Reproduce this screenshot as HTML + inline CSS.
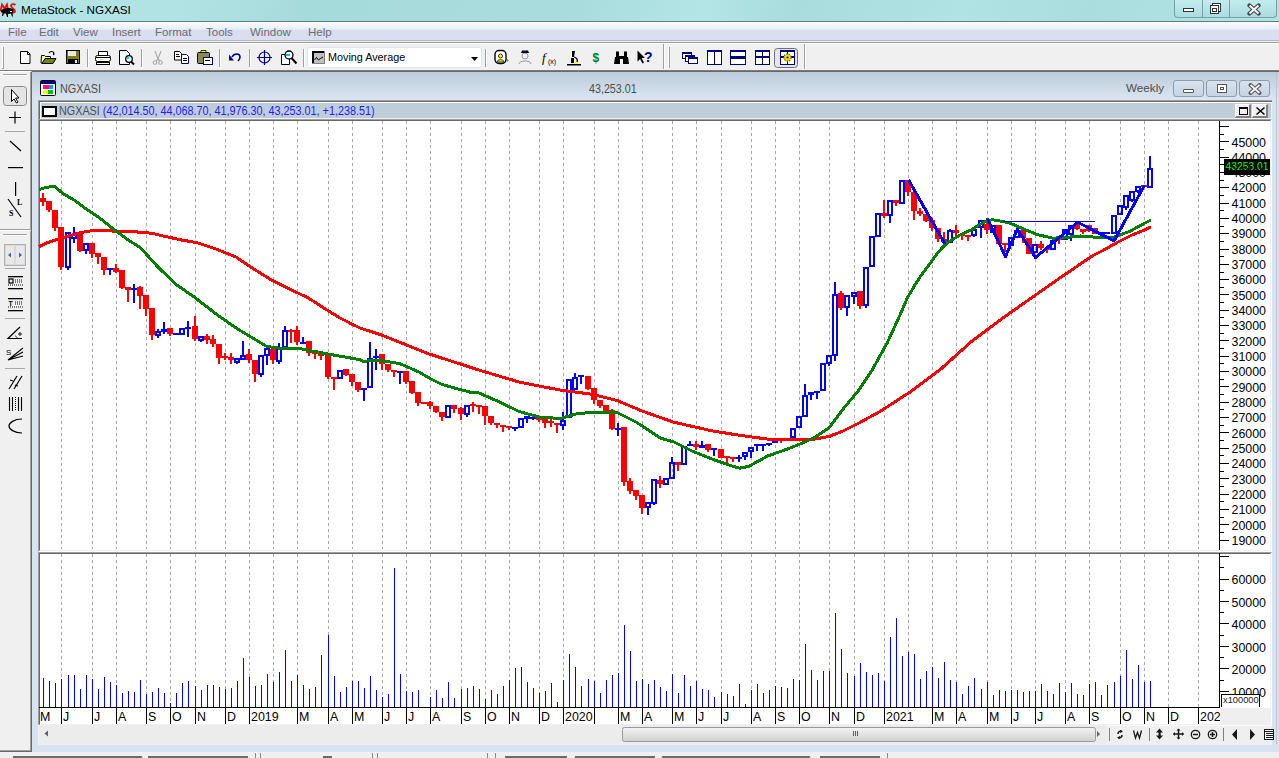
<!DOCTYPE html>
<html><head><meta charset="utf-8">
<style>
*{box-sizing:border-box;margin:0;padding:0}
html,body{width:1279px;height:758px;overflow:hidden;background:#f0f0f0;font-family:"Liberation Sans",sans-serif;font-size:12px;color:#000}
.a{position:absolute}
#title{left:0;top:0;width:1279px;height:22px;background:linear-gradient(110deg,#b4e4e5 0%,#b1e3e4 14%,#a6dbdc 24%,#a9dddd 45%,#b3e5e6 55%,#a8dcdd 62%,#b0e3e4 75%,#aadede 85%,#b2e4e5 100%);border-bottom:1px solid #5f7c80}
#title .t{left:21px;top:3px;font-size:11.7px;color:#000}
#menu{left:0;top:22px;width:1279px;height:19px;background:linear-gradient(#fbfbfd 0%,#eceff7 35%,#d8ddef 50%,#dadff0 100%);border-bottom:1px solid #b4b8c4}
#menu span{position:absolute;top:3.8px;color:#6d6d6d;font-size:11.5px}
#tool{left:0;top:41px;width:1279px;height:30px;background:linear-gradient(#ebebeb 0,#ebebeb 1px,#a0a0a0 1px,#a0a0a0 2px,#fff 2px,#fff 3px,#f0f0f0 3px);border-bottom:1px solid #7c7c7c}
.sep{position:absolute;width:2px;border-left:1px solid #a0a0a0;border-right:1px solid #fff}
#ltool{left:0;top:71px;width:32px;height:681px;background:#f0f0f0;border-top:1px solid #fff;border-right:1px solid #696969;border-bottom:1px solid #696969;box-shadow:inset -1px -1px 0 #a0a0a0}
#mdi{left:32px;top:71px;width:1247px;height:681px;background:#d6e3f0;border-top:1px solid #696969}
#child{left:32px;top:72px;width:1247px;height:28px;background:linear-gradient(#bccbda,#dbe6f1)}
#child .t{left:28px;top:9.5px;font-size:12.6px;color:#4d4d4d;transform:scaleX(0.86);transform-origin:0 0}
.cbtn{position:absolute;top:8px;height:17px;width:31px;border:1px solid #8b9cb3;border-radius:3px;background:linear-gradient(#d9e3ee,#c5d3e2)}
#cw{left:38px;top:100px;width:1234px;height:625px;background:#f0f0f0;border-left:1px solid #a0a0a0;border-top:1px solid #a0a0a0}
#cw2{left:39px;top:101px;width:1233px;height:624px;border-left:1px solid #696969;border-top:1px solid #696969}
.sunk{position:absolute;box-sizing:border-box;border-style:solid;border-width:1px;border-color:#a0a0a0 #fff #fff #a0a0a0}
.sunk>div{position:absolute;left:0;top:0;right:0;bottom:0;border-style:solid;border-width:1px;border-color:#696969 #f0f0f0 #f0f0f0 #696969;background:#fff}
#ctitle{left:40px;top:102px;width:1231px;height:17px;background:#bfcddb;border-top:1px solid #fff;border-left:1px solid #fff;border-bottom:1px solid #f0f0f0}
#corner{left:1220px;top:708px;width:51px;height:17px;background:#efefef}
#scroll{left:38px;top:725px;width:1234px;height:20px;background:#efefef;border-top:1px solid #fafafa}
.yl{position:absolute;left:1230px;width:36px;text-align:right;font-size:12.4px;line-height:14px;color:#000}
.xl{position:absolute;top:710px;font-size:12.4px;line-height:14px;color:#000;background:#fff;padding-right:1px}
#status{left:0;top:752px;width:1279px;height:6px;background:#f0f0f0}
</style></head><body>
<div id="title" class="a">
  <div class="a" style="left:0;top:2px;width:17px;height:16px">
    <svg width="17" height="18" style="position:absolute;top:-2px"><path d="M0.5 11l1.5-6.5l2.5 4l2.5-4l1 6" fill="none" stroke="#ff0000" stroke-width="1.8"/><path d="M15.5 5c-1-1-4-1.5-4.5 0.5c-0.5 2 4 3.5 4 5.5c0 1.5-2 2-3 1.5" fill="none" stroke="#ff0000" stroke-width="1.8"/><path d="M1 10.5c2-2.5 8-3.5 12-1.5c1 1 1 3-0.5 4l0.5 3.5h-1l-1-3l-3 0.5l0 3h-1l-1-3.5l-2 0l-1 2.5h-1l0.5-3c-1.5-0.5-2-1.5-1.5-2.5z" fill="#000"/><rect x="10" y="11" width="2" height="1" fill="#fff"/></svg>
  </div>
  <div class="a t">MetaStock - NGXASI</div>
  <div class="a" style="left:1174px;top:0;width:103px;height:18px;border:1px solid #7f9da1;border-top:none;border-radius:0 0 4px 4px;background:linear-gradient(#c3ecee,#a9dde0)"></div>
  <div class="a" style="left:1202px;top:0;width:1px;height:17px;background:#7f9da1"></div>
  <div class="a" style="left:1229px;top:0;width:1px;height:17px;background:#7f9da1"></div>
  <div class="a" style="left:1183px;top:8px;width:11px;height:4px;border:1px solid #333;background:#fff"></div>
  <svg class="a" style="left:1209px;top:2px" width="13" height="13"><rect x="3.5" y="1.5" width="8" height="8" fill="#fff" stroke="#333"/><rect x="1.5" y="3.5" width="8" height="8" fill="#fff" stroke="#333"/><rect x="3.5" y="6.5" width="4" height="3" fill="none" stroke="#333"/></svg>
  <svg class="a" style="left:1246px;top:3px" width="16" height="13"><path d="M3.5 2.5 L12.5 10.5 M12.5 2.5 L3.5 10.5" stroke="#444" stroke-width="4.2" stroke-linecap="round"/><path d="M3.5 2.5 L12.5 10.5 M12.5 2.5 L3.5 10.5" stroke="#f4f4f4" stroke-width="2.2"/></svg>
</div>
<div id="menu" class="a">
  <span style="left:8px">File</span><span style="left:39px">Edit</span><span style="left:73px">View</span><span style="left:112px">Insert</span><span style="left:155px">Format</span><span style="left:206px">Tools</span><span style="left:250px">Window</span><span style="left:308px">Help</span>
</div>
<div id="tool" class="a">
<!--TOOLBAR-->
</div>
<div id="ltool" class="a">
<!--LTOOL-->
</div>
<div id="mdi" class="a"></div>
<div id="child" class="a">
  <svg class="a" style="left:8px;top:8px" width="16" height="17"><rect x="0.5" y="0.5" width="15" height="15" rx="1" fill="#fff" stroke="#000"/><rect x="1" y="1" width="14" height="3" fill="#000080"/><rect x="3" y="5" width="10" height="4" fill="#ff00a0"/><rect x="9" y="5" width="4" height="4" fill="#00a0ff"/><rect x="3" y="10" width="10" height="4" fill="#00c000"/><rect x="3" y="10" width="5" height="4" fill="#ffff00"/></svg>
  <div class="a t">NGXASI</div>
  <div class="a" style="left:557px;top:9.5px;font-size:12.6px;color:#4d4d4d;transform:scaleX(0.85);transform-origin:0 0">43,253.01</div>
  <div class="a" style="left:1094px;top:8.5px;font-size:11.7px;color:#4d4d4d">Weekly</div>
  <div class="cbtn" style="left:1141px"><div class="a" style="left:9px;top:8px;width:11px;height:4px;border:1px solid #555;background:#fff;border-radius:1px"></div></div>
  <div class="cbtn" style="left:1174px"><div class="a" style="left:10px;top:3px;width:10px;height:9px;border:1px solid #555;background:#fff"></div><div class="a" style="left:13px;top:6px;width:4px;height:3px;border:1px solid #555"></div></div>
  <div class="cbtn" style="left:1207px"><svg class="a" style="left:8px;top:2px" width="14" height="12"><path d="M2.5 2 L11.5 10 M11.5 2 L2.5 10" stroke="#555" stroke-width="3.8" stroke-linecap="round"/><path d="M2.5 2 L11.5 10 M11.5 2 L2.5 10" stroke="#f4f4f4" stroke-width="1.8"/></svg></div>
</div>
<div class="a" style="left:1276px;top:72px;width:1px;height:672px;background:#b9c6d4"></div>
<div id="cw" class="a"></div><div id="cw2" class="a"></div>
<div id="ctitle" class="a">
  <div class="a" style="left:1px;top:3px;width:15px;height:11px;border:2px solid #000;background:#fff"></div>
  <div class="a" style="left:18px;top:1px;font-size:12.5px;color:#4d4d4d;white-space:nowrap;transform:scaleX(0.864);transform-origin:0 0">NGXASI <span style="color:#1c1cff">(42,014.50, 44,068.70, 41,976.30, 43,253.01, +1,238.51)</span></div>
  <div class="a" style="left:1194px;top:1px;width:16px;height:14px;background:#f0f0f0;border-right:2px solid #808080;border-bottom:2px solid #808080;border-top:1px solid #fff;border-left:1px solid #fff"><div class="a" style="left:3px;top:2px;width:9px;height:8px;border:1px solid #000;border-top-width:2px"></div></div>
  <div class="a" style="left:1211px;top:1px;width:16px;height:14px;background:#f0f0f0;border-right:2px solid #808080;border-bottom:2px solid #808080;border-top:1px solid #fff;border-left:1px solid #fff"><svg class="a" style="left:2px;top:1px" width="11" height="11"><path d="M1.5 1.5L9.5 8.5M9.5 1.5L1.5 8.5" stroke="#000" stroke-width="1.5"/></svg></div>
</div>
<div class="sunk" style="left:38px;top:119px;width:1234px;height:433px"><div></div></div>
<div class="sunk" style="left:38px;top:552px;width:1234px;height:174px"><div></div></div>
<div id="corner" class="a"></div>
<div id="scroll" class="a">
<!--SCROLL-->
</div>
<div id="status" class="a"></div>
<svg width="1279" height="758" style="position:absolute;left:0;top:0"><defs><linearGradient id="thumb" x1="0" y1="0" x2="0" y2="1"><stop offset="0" stop-color="#f4f4f4"/><stop offset="0.5" stop-color="#e2e2e2"/><stop offset="1" stop-color="#cfcfcf"/></linearGradient></defs><rect x="2" y="47" width="1" height="22" fill="#fff"/><rect x="3" y="47" width="1" height="22" fill="#a0a0a0"/><rect x="2" y="68" width="2" height="1" fill="#a0a0a0"/><path d="M20.5 51.5h7l2.5 2.5v9.5h-9.5z" fill="#fff" stroke="#000"/><path d="M27.5 51.5v3h2.5" fill="none" stroke="#000"/><path d="M41.5 55.5h3l1 1h5v6.5h-9.5z" fill="#ffff80" stroke="#000"/><path d="M42 63.5l3-5h11l-3 5z" fill="#808000" stroke="#000"/><path d="M49 53c1-2 4-2 5 0" fill="none" stroke="#000" stroke-width="1.2"/><path d="M53 52.5l2 1.5l-2 1.5" fill="#000"/><rect x="66.5" y="50.5" width="13" height="13" fill="#808000" stroke="#000"/><rect x="68" y="51" width="8" height="5" fill="#e8e8e8"/><rect x="68" y="59" width="10" height="4.5" fill="#000"/><rect x="75" y="60" width="2" height="3" fill="#e8e8e8"/><rect x="87" y="49" width="1" height="18" fill="#a0a0a0"/><rect x="88" y="49" width="1" height="18" fill="#fff"/><path d="M98.5 51.5h9v4h-9z" fill="#fff" stroke="#000"/><rect x="95.5" y="55.5" width="15" height="6" rx="2" fill="#fff" stroke="#000"/><rect x="96" y="57" width="14" height="1" fill="#000"/><rect x="100" y="59" width="3" height="1" fill="#ff0"/><rect x="96.5" y="62.5" width="13" height="2" fill="#fff" stroke="#000"/><path d="M119.5 50.5h7l3 3v11h-10z" fill="#fff" stroke="#000"/><circle cx="129" cy="59" r="3.3" fill="#e6f7ff" stroke="#000" stroke-width="1.3"/><path d="M131 61.5l3 3" stroke="#000" stroke-width="2"/><rect x="127" y="57" width="2" height="2" fill="#00e0ff"/><rect x="141" y="49" width="1" height="18" fill="#a0a0a0"/><rect x="142" y="49" width="1" height="18" fill="#fff"/><g stroke="#a8a8a8" fill="none" stroke-width="1.1"><path d="M155 51l3 8l3-8"/><circle cx="155" cy="62.5" r="1.8"/><circle cx="160.5" cy="62.5" r="1.8"/><path d="M156 61l2-2l2 2"/></g><path d="M174.5 51.5h5l2 2v6.5h-7z" fill="#fff" stroke="#000"/><rect x="176" y="54" width="3" height="1" fill="#000"/><rect x="176" y="56" width="4" height="1" fill="#000"/><path d="M181.5 54.5h5l2 2v7h-7z" fill="#fff" stroke="#000080"/><rect x="183" y="58" width="4" height="1" fill="#000"/><rect x="183" y="60" width="4" height="1" fill="#000"/><rect x="197.5" y="52.5" width="12" height="11" rx="1" fill="#8a8a4a" stroke="#000"/><path d="M201 52.5h5v-2h-5z" fill="#ff0" stroke="#000" stroke-width="0.8"/><rect x="203.5" y="57.5" width="9" height="7" fill="#fff" stroke="#000080"/><rect x="205" y="60" width="5" height="1" fill="#000"/><rect x="219" y="49" width="1" height="18" fill="#a0a0a0"/><rect x="220" y="49" width="1" height="18" fill="#fff"/><path d="M232 57c2-4 8-4 8 0c0 2-1 3-2 4" fill="none" stroke="#000080" stroke-width="1.6"/><path d="M229 54.5v6h5z" fill="#000080"/><rect x="249" y="49" width="1" height="18" fill="#a0a0a0"/><rect x="250" y="49" width="1" height="18" fill="#fff"/><circle cx="264.5" cy="57.5" r="5.5" fill="none" stroke="#000080" stroke-width="1.2"/><path d="M264.5 50v15M257 57.5h15" stroke="#000080" stroke-width="1.2"/><path d="M281.5 54.5h6l2 2v8h-8z" fill="#fff" stroke="#000"/><circle cx="289" cy="55" r="4" fill="#fff" stroke="#000" stroke-width="1.3"/><rect x="286" y="54" width="4" height="2" fill="#00c8e0"/><path d="M291.5 58l5 5.5" stroke="#000" stroke-width="2"/><rect x="303" y="49" width="1" height="18" fill="#a0a0a0"/><rect x="304" y="49" width="1" height="18" fill="#fff"/><rect x="307.5" y="47.5" width="174" height="20" rx="2" fill="#fff" stroke="#dde5ee"/><rect x="312" y="51" width="13" height="13" fill="#808080"/><rect x="312" y="51" width="12" height="12" fill="#000"/><rect x="314" y="53" width="10" height="10" fill="#c0c0c0"/><path d="M314.5 60l2-2.5l2 2.5l2-1.5l2.5-1.5" fill="none" stroke="#000" stroke-width="1"/><path d="M471 57h7l-3.5 4z" fill="#000"/><rect x="485" y="49" width="1" height="18" fill="#a0a0a0"/><rect x="486" y="49" width="1" height="18" fill="#fff"/><rect x="495" y="50.5" width="11" height="13" rx="4" fill="#fff" stroke="#000" stroke-width="1.4"/><circle cx="500.5" cy="56" r="2" fill="#ff0" stroke="#000" stroke-width="0.8"/><path d="M497 62c0-3 7-3 7 0z" fill="#ff0" stroke="#000" stroke-width="0.8"/><path d="M507 59l2 1.5l-2 1.5z" fill="#808080"/><g fill="none" stroke="#9a9a9a"><circle cx="525" cy="56" r="3"/><path d="M519 64c0-4 12-4 12 0"/></g><path d="M521 53h8l-1-2.5h-6z" fill="#000"/><rect x="524" y="51" width="2" height="1" fill="#00f"/><text x="542" y="62" font-family="Liberation Serif" font-style="italic" font-size="13" fill="#000">f</text><text x="548" y="64" font-family="Liberation Sans" font-size="7" fill="#000">(x)</text><path d="M572 51l3 0l-1 6l-2 0z" fill="#000"/><path d="M574 57c3 1 4 3 3 5" fill="none" stroke="#000" stroke-width="1.3"/><rect x="571" y="58" width="3" height="5" fill="#000"/><rect x="567" y="64" width="14" height="1.5" fill="#000"/><rect x="574" y="62" width="4" height="1.5" fill="#ff0"/><text x="592.5" y="61.5" font-family="Liberation Sans" font-weight="bold" font-size="12" fill="#008000">$</text><path d="M615 57h5v7h-6z M623 57h5l1 7h-6z" fill="#000"/><rect x="616" y="51.5" width="3" height="6" fill="#000"/><rect x="624" y="51.5" width="3" height="6" fill="#000"/><rect x="619" y="56" width="5" height="3" fill="#000"/><path d="M637.5 50.5v11l2.5-2.5l2.5 4.5l1.5-1l-2.5-4.5h3.5z" fill="#000"/><text x="644" y="61.5" font-family="Liberation Sans" font-weight="bold" font-size="14" fill="#000080">?</text><rect x="663" y="44" width="1" height="25" fill="#a0a0a0"/><rect x="664" y="44" width="1" height="25" fill="#fff"/><rect x="668" y="47" width="1" height="21" fill="#fff"/><rect x="669" y="47" width="1" height="21" fill="#a0a0a0"/><g fill="#fff" stroke="#000080"><rect x="682.5" y="52.5" width="9" height="6"/><rect x="685.5" y="55.5" width="9" height="6"/><rect x="688.5" y="57.5" width="9" height="6"/></g><g fill="#000080"><rect x="682" y="52" width="10" height="2"/><rect x="685" y="55" width="10" height="2"/><rect x="688" y="57" width="10" height="2"/></g><rect x="707.5" y="50.5" width="14" height="14" fill="#fff" stroke="#000080"/><rect x="707" y="50" width="15" height="2" fill="#000080"/><rect x="714" y="50" width="1" height="15" fill="#000080"/><rect x="730.5" y="50.5" width="15" height="14" fill="#fff" stroke="#000080"/><rect x="730" y="50" width="16" height="2" fill="#000080"/><rect x="730" y="56" width="16" height="3" fill="#000080"/><rect x="755.5" y="50.5" width="14" height="14" fill="#fff" stroke="#000080"/><rect x="755" y="50" width="15" height="2" fill="#000080"/><rect x="755" y="56" width="15" height="2" fill="#000080"/><rect x="762" y="50" width="1" height="15" fill="#000080"/><rect x="774.5" y="48.5" width="23" height="19" rx="3" fill="#e6e6e6" stroke="#707070"/><rect x="780.5" y="50.5" width="14" height="14" fill="#fff" stroke="#000080"/><rect x="780" y="50" width="15" height="2" fill="#000080"/><rect x="780" y="56" width="15" height="2" fill="#000080"/><rect x="787" y="50" width="1" height="15" fill="#000080"/><circle cx="787.5" cy="57.5" r="3.6" fill="#e8e000" stroke="#806000" stroke-width="1.2" stroke-dasharray="1.5 1"/><circle cx="787.5" cy="57.5" r="1" fill="#000"/><rect x="804" y="44" width="1" height="25" fill="#a0a0a0"/><rect x="805" y="44" width="1" height="25" fill="#fff"/><rect x="3" y="74" width="24" height="1" fill="#a0a0a0"/><rect x="3" y="75" width="24" height="1" fill="#fff"/><rect x="3.5" y="86.5" width="23" height="19" rx="3" fill="#e4e4e4" stroke="#8a8a8a"/><path d="M11.5 89.5v12l2.5-2.5l2.5 4l1.5-1l-2.5-4h3.5z" fill="#fff" stroke="#000"/><path d="M9 117.5h12M15 111.5v12" stroke="#000" stroke-width="1.2"/><rect x="5" y="131" width="20" height="1" fill="#a8a8a8"/><path d="M10 141l11 10" stroke="#000" stroke-width="1.2"/><rect x="8" y="167" width="15" height="1.2" fill="#000"/><rect x="15" y="182" width="1.2" height="14" fill="#000"/><path d="M8 199l13 18" stroke="#000" stroke-width="1.2"/><text x="17" y="205" font-family="Liberation Serif" font-weight="bold" font-size="8" fill="#000">L</text><text x="9" y="216" font-family="Liberation Serif" font-weight="bold" font-size="8" fill="#000">S</text><rect x="0" y="229" width="31" height="1" fill="#a0a0a0"/><rect x="0" y="230" width="31" height="1" fill="#fff"/><rect x="3" y="234" width="24" height="1" fill="#a0a0a0"/><rect x="3" y="235" width="24" height="1" fill="#fff"/><rect x="4.5" y="244.5" width="21" height="21" fill="#d8d8d8" stroke="#b0b0b0"/><rect x="6" y="246" width="8" height="18" fill="#e8e8e8"/><rect x="16" y="246" width="8" height="18" fill="#e8e8e8"/><path d="M11 252.5l-3 2.5l3 2.5z M19 252.5l3 2.5l-3 2.5z" fill="#4060b0"/><rect x="5" y="268" width="20" height="1" fill="#a8a8a8"/><rect x="8" y="276" width="15" height="1.3" fill="#000"/><rect x="9" y="279" width="4" height="4" fill="none" stroke="#000" stroke-width="1.2"/><path d="M15 280h8M15 282h8" stroke="#000" stroke-dasharray="1 1"/><path d="M8 285h15" stroke="#000" stroke-dasharray="1 1"/><rect x="8" y="288" width="15" height="1.3" fill="#000"/><rect x="8" y="298" width="15" height="1.3" fill="#000"/><text x="8.5" y="306" font-family="Liberation Sans" font-weight="bold" font-size="7" fill="#000">T</text><path d="M15 302h8M15 304h8" stroke="#000" stroke-dasharray="1 1"/><path d="M8 307h15" stroke="#000" stroke-dasharray="1 1"/><rect x="8" y="310" width="15" height="1.3" fill="#000"/><rect x="5" y="318" width="20" height="1" fill="#a8a8a8"/><path d="M20 327l-12 11.5h14" fill="none" stroke="#000" stroke-width="1.2"/><circle cx="20" cy="334" r="1.2" fill="none" stroke="#000"/><path d="M15 336c1 0 2 1 2 2" fill="none" stroke="#000" stroke-width="0.8"/><text x="6" y="355" font-family="Liberation Sans" font-size="8" fill="#000">S</text><path d="M8 360l15-12M8 360l15-8M8 360l15-4" stroke="#000" stroke-width="1.1"/><rect x="5" y="368" width="20" height="1" fill="#a8a8a8"/><path d="M9 389l8-13M14 389l8-13" stroke="#000" stroke-width="1.2"/><path d="M10 380l3 1M15 385l3 1" stroke="#000" stroke-width="1.2"/><path d="M9.5 397v14M12.5 397v14M18.5 397v14M21.5 397v14" stroke="#000" stroke-width="1.1"/><path d="M15.5 397v14" stroke="#000" stroke-dasharray="1 1"/><path d="M22 419c-8 0-13 4-13 7c0 3 5 7 13 7" fill="none" stroke="#000" stroke-width="1.2"/><rect x="39" y="725" width="1067" height="19" fill="#ececec"/><path d="M48 730.5v6l-3.5-3z" fill="#606060"/><rect x="622.5" y="727.5" width="473" height="14" rx="2" fill="url(#thumb)" stroke="#9a9a9a"/><path d="M853.5 731v5M855.5 731v5M857.5 731v5" stroke="#606060"/><path d="M1097 731v6l3-3z" fill="#606060"/><rect x="1109" y="728" width="1" height="13" fill="#808080"/><path d="M1122 731c-3 0-4 1-4 3M1118 738c3 0 4-1 4-3" stroke="#1a1a1a" stroke-width="1.6" fill="none"/><path d="M1120 730l3 1.5l-3 1.5z M1120 736l-3 1.5l3 1.5z" fill="#1a1a1a"/><path d="M1133.5 730.5l2 7.5l2-5.5l2 5.5l2-7.5" stroke="#1a1a1a" stroke-width="1.3" fill="none"/><rect x="1149" y="728" width="1" height="13" fill="#808080"/><path d="M1159.5 728.5l3.5 4h-7z M1159.5 739.5l3.5-4h-7z" fill="#1a1a1a"/><rect x="1158.5" y="731" width="2.2" height="6" fill="#1a1a1a"/><path d="M1178.5 729v10M1173.5 734h10" stroke="#1a1a1a" stroke-width="1.5"/><path d="M1178.5 728.5l2 2h-4z M1178.5 739.5l2-2h-4z M1173 734l2-2v4z M1184 734l-2-2v4z" fill="#1a1a1a"/><circle cx="1195.5" cy="734.5" r="4.2" fill="none" stroke="#1a1a1a" stroke-width="1.3"/><path d="M1193 734.5h5" stroke="#1a1a1a" stroke-width="1.5"/><circle cx="1212.5" cy="734.5" r="4.2" fill="none" stroke="#1a1a1a" stroke-width="1.3"/><path d="M1210 734.5h5M1212.5 732v5" stroke="#1a1a1a" stroke-width="1.5"/><rect x="1223" y="728" width="1" height="13" fill="#808080"/><path d="M1237 729v11l-5-5.5z M1250 729v11l5-5.5z" fill="#1a1a1a"/><rect x="1264.5" y="729.5" width="9" height="10" fill="#f8f8f8" stroke="#1a1a1a"/><path d="M1264 731.5h10M1266 733.5h7M1266 735.5h7M1266 737.5h7" stroke="#1a1a1a"/><rect x="13" y="756" width="129" height="2" fill="#6a6a6a"/><rect x="148" y="756" width="100" height="2" fill="#6a6a6a"/><rect x="323" y="756" width="9" height="2" fill="#6a6a6a"/><rect x="505" y="756" width="62" height="2" fill="#6a6a6a"/><rect x="575" y="756" width="80" height="2" fill="#6a6a6a"/><rect x="662" y="756" width="148" height="2" fill="#6a6a6a"/><rect x="820" y="756" width="60" height="2" fill="#6a6a6a"/><rect x="255" y="753" width="1" height="5" fill="#8a8a8a"/><rect x="260" y="753" width="1" height="5" fill="#8a8a8a"/><rect x="372" y="753" width="1" height="5" fill="#8a8a8a"/><rect x="377" y="753" width="1" height="5" fill="#8a8a8a"/><rect x="487" y="753" width="1" height="5" fill="#8a8a8a"/><rect x="495" y="753" width="1" height="5" fill="#8a8a8a"/><rect x="887" y="753" width="1" height="5" fill="#8a8a8a"/></svg>
<svg width="1279" height="758" viewBox="0 0 1279 758" style="position:absolute;left:0;top:0" shape-rendering="crispEdges">
<path d="M61.5 121V549M61.5 554V707M92.5 121V549M92.5 554V707M116.5 121V549M116.5 554V707M146.5 121V549M146.5 554V707M170.5 121V549M170.5 554V707M195.5 121V549M195.5 554V707M225.5 121V549M225.5 554V707M249.5 121V549M249.5 554V707M273.5 121V549M273.5 554V707M297.5 121V549M297.5 554V707M328.5 121V549M328.5 554V707M352.5 121V549M352.5 554V707M382.5 121V549M382.5 554V707M406.5 121V549M406.5 554V707M430.5 121V549M430.5 554V707M461.5 121V549M461.5 554V707M485.5 121V549M485.5 554V707M509.5 121V549M509.5 554V707M539.5 121V549M539.5 554V707M563.5 121V549M563.5 554V707M594.5 121V549M594.5 554V707M618.5 121V549M618.5 554V707M642.5 121V549M642.5 554V707M672.5 121V549M672.5 554V707M696.5 121V549M696.5 554V707M721.5 121V549M721.5 554V707M751.5 121V549M751.5 554V707M775.5 121V549M775.5 554V707M799.5 121V549M799.5 554V707M829.5 121V549M829.5 554V707M854.5 121V549M854.5 554V707M884.5 121V549M884.5 554V707M908.5 121V549M908.5 554V707M932.5 121V549M932.5 554V707M956.5 121V549M956.5 554V707M987.5 121V549M987.5 554V707M1011.5 121V549M1011.5 554V707M1035.5 121V549M1035.5 554V707M1065.5 121V549M1065.5 554V707M1089.5 121V549M1089.5 554V707M1120.5 121V549M1120.5 554V707M1144.5 121V549M1144.5 554V707M1168.5 121V549M1168.5 554V707M1198.5 121V549M1198.5 554V707" stroke="#a9a9a9" stroke-width="1" stroke-dasharray="3 3" fill="none"/>
<path d="M43.5 678V707M49.5 681V707M55.5 683V707M61.5 679V707M68.5 675V707M74.5 675V707M80.5 689V707M86.5 675V707M92.5 679V707M98.5 689V707M104.5 677V707M110.5 682V707M116.5 685V707M122.5 693V707M128.5 691V707M134.5 692V707M140.5 680V707M146.5 694V707M152.5 692V707M158.5 688V707M164.5 693V707M170.5 703V707M176.5 693V707M182.5 683V707M188.5 681V707M195.5 686V707M201.5 690V707M207.5 685V707M213.5 685V707M219.5 687V707M225.5 689V707M231.5 688V707M237.5 681V707M243.5 658V707M249.5 677V707M255.5 686V707M261.5 685V707M267.5 674V707M273.5 682V707M279.5 672V707M285.5 650V707M291.5 681V707M297.5 675V707M303.5 685V707M309.5 689V707M315.5 687V707M321.5 655V707M328.5 635V707M334.5 676V707M340.5 692V707M346.5 687V707M352.5 681V707M358.5 681V707M364.5 688V707M370.5 676V707M376.5 690V707M382.5 697V707M388.5 694V707M394.5 568V707M400.5 674V707M406.5 691V707M412.5 692V707M418.5 690V707M430.5 697V707M436.5 690V707M442.5 698V707M448.5 682V707M454.5 698V707M461.5 689V707M467.5 688V707M473.5 686V707M479.5 689V707M485.5 699V707M491.5 690V707M497.5 694V707M503.5 686V707M509.5 680V707M515.5 668V707M521.5 667V707M527.5 682V707M533.5 688V707M539.5 693V707M545.5 691V707M551.5 683V707M557.5 702V707M563.5 680V707M569.5 654V707M575.5 667V707M581.5 686V707M588.5 679V707M594.5 681V707M600.5 693V707M606.5 680V707M612.5 675V707M618.5 673V707M624.5 625V707M630.5 651V707M636.5 681V707M642.5 679V707M648.5 684V707M654.5 680V707M660.5 687V707M666.5 691V707M672.5 674V707M678.5 693V707M684.5 675V707M690.5 686V707M696.5 681V707M702.5 689V707M708.5 690V707M714.5 697V707M721.5 692V707M727.5 694V707M733.5 696V707M739.5 684V707M745.5 704V707M751.5 690V707M757.5 684V707M763.5 693V707M769.5 690V707M775.5 686V707M781.5 687V707M787.5 688V707M793.5 679V707M799.5 680V707M805.5 644V707M811.5 670V707M817.5 680V707M823.5 671V707M829.5 671V707M835.5 613V707M841.5 649V707M847.5 673V707M854.5 676V707M860.5 663V707M866.5 672V707M872.5 675V707M878.5 673V707M884.5 681V707M890.5 637V707M896.5 618V707M902.5 656V707M908.5 652V707M914.5 654V707M920.5 679V707M926.5 671V707M932.5 667V707M938.5 678V707M944.5 662V707M950.5 680V707M956.5 682V707M962.5 694V707M968.5 686V707M974.5 678V707M981.5 689V707M987.5 682V707M993.5 695V707M999.5 690V707M1005.5 691V707M1011.5 690V707M1017.5 690V707M1023.5 692V707M1029.5 691V707M1035.5 691V707M1041.5 684V707M1047.5 691V707M1053.5 694V707M1059.5 683V707M1065.5 692V707M1071.5 683V707M1077.5 694V707M1083.5 695V707M1089.5 684V707M1095.5 682V707M1101.5 695V707M1107.5 685V707M1114.5 682V707M1120.5 676V707M1126.5 650V707M1132.5 679V707M1138.5 665V707M1144.5 682V707M1150.5 681V707" stroke="#0000ff" stroke-width="1" fill="none"/>
<path d="M42 193h2V206h-2Z M40 198h6V202h-6Z M48 201h2V212h-2Z M46 201h6V210h-6Z M54 210h2V231h-2Z M52 210h6V228h-6Z M60 227h2V270h-2Z M58 227h6V267h-6Z M79 232h2V252h-2Z M77 232h6V251h-6Z M91 243h2V258h-2Z M89 243h6V254h-6Z M97 253h2V264h-2Z M95 253h6V257h-6Z M103 257h2V275h-2Z M101 257h6V270h-6Z M115 264h2V273h-2Z M113 268h6V272h-6Z M121 270h2V289h-2Z M119 270h6V288h-6Z M127 287h2V302h-2Z M125 287h6V290h-6Z M139 286h2V309h-2Z M137 287h6V296h-6Z M145 295h2V316h-2Z M143 295h6V309h-6Z M151 308h2V340h-2Z M149 308h6V335h-6Z M169 328h2V336h-2Z M167 328h6V334h-6Z M194 316h2V341h-2Z M192 326h6V339h-6Z M206 334h2V344h-2Z M204 336h6V340h-6Z M212 335h2V347h-2Z M210 339h6V344h-6Z M218 344h2V364h-2Z M216 344h6V358h-6Z M224 353h2V360h-2Z M222 356h6V358h-6Z M230 353h2V364h-2Z M228 357h6V360h-6Z M248 349h2V363h-2Z M246 354h6V360h-6Z M254 360h2V382h-2Z M252 360h6V374h-6Z M272 349h2V364h-2Z M270 349h6V360h-6Z M290 329h2V343h-2Z M288 330h6V332h-6Z M296 326h2V345h-2Z M294 330h6V342h-6Z M308 341h2V356h-2Z M306 341h6V353h-6Z M314 352h2V359h-2Z M312 352h6V354h-6Z M320 354h2V360h-2Z M318 354h6V356h-6Z M327 355h2V379h-2Z M325 355h6V377h-6Z M333 377h2V390h-2Z M331 377h6V379h-6Z M345 369h2V376h-2Z M343 369h6V375h-6Z M351 374h2V386h-2Z M349 374h6V382h-6Z M357 382h2V392h-2Z M355 382h6V390h-6Z M381 354h2V370h-2Z M379 354h6V364h-6Z M387 364h2V372h-2Z M385 364h6V370h-6Z M393 370h2V377h-2Z M391 370h6V372h-6Z M405 371h2V384h-2Z M403 371h6V382h-6Z M411 381h2V394h-2Z M409 381h6V393h-6Z M417 392h2V406h-2Z M415 392h6V403h-6Z M423 402h2V404h-2Z M421 402h6V404h-6Z M429 401h2V409h-2Z M427 402h6V406h-6Z M435 406h2V413h-2Z M433 406h6V412h-6Z M441 412h2V421h-2Z M439 412h6V417h-6Z M453 405h2V413h-2Z M451 405h6V409h-6Z M460 407h2V420h-2Z M458 408h6V414h-6Z M472 402h2V412h-2Z M470 404h6V406h-6Z M478 405h2V414h-2Z M476 405h6V407h-6Z M484 406h2V425h-2Z M482 406h6V416h-6Z M490 416h2V425h-2Z M488 416h6V423h-6Z M496 423h2V428h-2Z M494 423h6V425h-6Z M502 425h2V432h-2Z M500 425h6V427h-6Z M508 426h2V430h-2Z M506 426h6V428h-6Z M538 418h2V422h-2Z M536 418h6V420h-6Z M544 419h2V428h-2Z M542 419h6V423h-6Z M550 419h2V427h-2Z M548 421h6V423h-6Z M556 423h2V433h-2Z M554 423h6V425h-6Z M587 376h2V390h-2Z M585 376h6V389h-6Z M593 388h2V404h-2Z M591 388h6V400h-6Z M599 400h2V408h-2Z M597 400h6V406h-6Z M605 405h2V411h-2Z M603 405h6V411h-6Z M611 409h2V430h-2Z M609 410h6V429h-6Z M623 427h2V486h-2Z M621 427h6V482h-6Z M629 478h2V494h-2Z M627 481h6V491h-6Z M635 490h2V500h-2Z M633 490h6V496h-6Z M641 495h2V514h-2Z M639 495h6V508h-6Z M659 476h2V488h-2Z M657 480h6V484h-6Z M677 462h2V471h-2Z M675 462h6V465h-6Z M695 441h2V450h-2Z M693 444h6V447h-6Z M707 444h2V452h-2Z M705 444h6V450h-6Z M720 449h2V458h-2Z M718 449h6V458h-6Z M726 456h2V463h-2Z M724 456h6V458h-6Z M732 457h2V462h-2Z M730 457h6V459h-6Z M780 438h2V443h-2Z M778 438h6V441h-6Z M786 438h2V440h-2Z M784 438h6V440h-6Z M840 291h2V310h-2Z M838 293h6V308h-6Z M859 291h2V309h-2Z M857 291h6V306h-6Z M883 200h2V218h-2Z M881 213h6V216h-6Z M895 200h2V206h-2Z M893 200h6V203h-6Z M907 180h2V196h-2Z M905 180h6V192h-6Z M913 192h2V220h-2Z M911 192h6V211h-6Z M919 208h2V216h-2Z M917 211h6V214h-6Z M925 214h2V222h-2Z M923 214h6V221h-6Z M931 218h2V231h-2Z M929 220h6V228h-6Z M937 228h2V242h-2Z M935 228h6V239h-6Z M943 232h2V243h-2Z M941 239h6V242h-6Z M955 225h2V236h-2Z M953 230h6V233h-6Z M961 234h2V240h-2Z M959 234h6V236h-6Z M967 235h2V241h-2Z M965 235h6V237h-6Z M986 218h2V234h-2Z M984 224h6V230h-6Z M998 225h2V244h-2Z M996 225h6V244h-6Z M1004 243h2V252h-2Z M1002 243h6V245h-6Z M1022 230h2V243h-2Z M1020 230h6V238h-6Z M1028 238h2V254h-2Z M1026 238h6V254h-6Z M1040 241h2V250h-2Z M1038 244h6V248h-6Z M1046 248h2V253h-2Z M1044 248h6V250h-6Z M1058 237h2V244h-2Z M1056 238h6V240h-6Z M1076 223h2V230h-2Z M1074 224h6V229h-6Z M1082 229h2V234h-2Z M1080 229h6V232h-6Z M1088 225h2V232h-2Z M1086 225h6V231h-6Z M1094 228h2V234h-2Z M1092 228h6V234h-6Z M1143 185h2V187h-2Z M1141 185h6V187h-6Z" fill="#ff0000"/>
<path d="M67 268h2V270h-2Z M65 232h6V268h-6Z M67 234V266h2V234Z M73 227h2V234h-2Z M73 239h2V243h-2Z M71 234h6V239h-6Z M73 236V237h2V236Z M85 251h2V254h-2Z M83 243h6V251h-6Z M85 245V249h2V245Z M109 270h2V275h-2Z M107 268h6V270h-6Z M133 284h2V288h-2Z M133 290h2V303h-2Z M131 288h6V290h-6Z M157 329h2V331h-2Z M157 336h2V338h-2Z M155 331h6V336h-6Z M157 333V334h2V333Z M163 322h2V329h-2Z M163 332h2V334h-2Z M161 329h6V332h-6Z M173 333h6V335h-6Z M179 328h6V335h-6Z M181 330V333h2V330Z M187 321h2V327h-2Z M187 329h2V337h-2Z M185 327h6V329h-6Z M200 341h2V342h-2Z M198 336h6V341h-6Z M200 338V339h2V338Z M236 363h2V364h-2Z M234 358h6V363h-6Z M236 360V361h2V360Z M242 341h2V355h-2Z M240 355h6V360h-6Z M242 357V358h2V357Z M260 375h2V377h-2Z M258 355h6V375h-6Z M260 357V373h2V357Z M266 356h2V365h-2Z M264 348h6V356h-6Z M266 350V354h2V350Z M278 343h2V348h-2Z M278 362h2V364h-2Z M276 348h6V362h-6Z M278 350V360h2V350Z M284 326h2V330h-2Z M282 330h6V348h-6Z M284 332V346h2V332Z M302 337h2V342h-2Z M300 342h6V344h-6Z M337 370h6V379h-6Z M339 372V377h2V372Z M363 390h2V401h-2Z M361 388h6V390h-6Z M369 342h2V358h-2Z M367 358h6V388h-6Z M369 360V386h2V360Z M375 349h2V356h-2Z M375 358h2V370h-2Z M373 356h6V358h-6Z M399 373h2V384h-2Z M397 371h6V373h-6Z M445 405h6V418h-6Z M447 407V416h2V407Z M466 415h2V417h-2Z M464 405h6V415h-6Z M466 407V413h2V407Z M514 429h2V431h-2Z M512 427h6V429h-6Z M518 418h6V428h-6Z M520 420V426h2V420Z M526 419h2V423h-2Z M524 416h6V419h-6Z M532 419h2V420h-2Z M530 417h6V419h-6Z M562 412h2V420h-2Z M562 426h2V430h-2Z M560 420h6V426h-6Z M562 422V424h2V422Z M566 379h6V418h-6Z M568 381V416h2V381Z M574 373h2V377h-2Z M572 377h6V390h-6Z M574 379V388h2V379Z M580 377h2V384h-2Z M578 375h6V377h-6Z M617 423h2V428h-2Z M617 430h2V436h-2Z M615 428h6V430h-6Z M647 508h2V515h-2Z M645 502h6V508h-6Z M647 504V506h2V504Z M653 504h2V505h-2Z M651 479h6V504h-6Z M653 481V502h2V481Z M663 478h6V485h-6Z M665 480V483h2V480Z M671 457h2V462h-2Z M669 462h6V479h-6Z M671 464V477h2V464Z M681 446h6V465h-6Z M683 448V463h2V448Z M689 441h2V444h-2Z M687 444h6V446h-6Z M701 441h2V445h-2Z M699 445h6V448h-6Z M713 450h2V456h-2Z M711 448h6V450h-6Z M738 455h2V457h-2Z M738 459h2V462h-2Z M736 457h6V459h-6Z M744 457h2V460h-2Z M742 452h6V457h-6Z M744 454V455h2V454Z M750 452h2V458h-2Z M748 447h6V452h-6Z M750 449V450h2V449Z M756 446h2V451h-2Z M754 444h6V446h-6Z M762 446h2V451h-2Z M760 444h6V446h-6Z M768 445h2V446h-2Z M766 443h6V445h-6Z M772 438h6V443h-6Z M774 440V441h2V440Z M790 428h6V438h-6Z M792 430V436h2V430Z M796 416h6V428h-6Z M798 418V426h2V418Z M804 384h2V395h-2Z M802 395h6V417h-6Z M804 397V415h2V397Z M810 395h2V400h-2Z M808 392h6V395h-6Z M816 393h2V399h-2Z M814 391h6V393h-6Z M820 363h6V391h-6Z M822 365V389h2V365Z M828 364h2V366h-2Z M826 355h6V364h-6Z M828 357V362h2V357Z M834 282h2V294h-2Z M834 356h2V361h-2Z M832 294h6V356h-6Z M834 296V354h2V296Z M846 308h2V316h-2Z M844 295h6V308h-6Z M846 297V306h2V297Z M853 297h2V304h-2Z M851 292h6V297h-6Z M853 294V295h2V294Z M865 306h2V308h-2Z M863 267h6V306h-6Z M865 269V304h2V269Z M869 236h6V267h-6Z M871 238V265h2V238Z M875 213h6V237h-6Z M877 215V235h2V215Z M889 216h2V223h-2Z M887 200h6V216h-6Z M889 202V214h2V202Z M899 180h6V204h-6Z M901 182V202h2V182Z M949 229h2V230h-2Z M947 230h6V243h-6Z M949 232V241h2V232Z M973 236h2V237h-2Z M971 229h6V236h-6Z M973 231V234h2V231Z M980 228h2V238h-2Z M978 220h6V228h-6Z M980 222V226h2V222Z M990 225h6V233h-6Z M992 227V231h2V227Z M1008 237h6V246h-6Z M1010 239V244h2V239Z M1014 230h6V238h-6Z M1016 232V236h2V232Z M1032 244h6V253h-6Z M1034 246V251h2V246Z M1050 240h6V250h-6Z M1052 242V248h2V242Z M1062 229h6V240h-6Z M1064 231V238h2V231Z M1070 235h2V241h-2Z M1068 225h6V235h-6Z M1070 227V233h2V227Z M1098 232h6V234h-6Z M1104 232h6V234h-6Z M1111 215h6V234h-6Z M1113 217V232h2V217Z M1117 205h6V215h-6Z M1119 207V213h2V207Z M1125 208h2V210h-2Z M1123 195h6V208h-6Z M1125 197V206h2V197Z M1131 201h2V202h-2Z M1129 191h6V201h-6Z M1131 193V199h2V193Z M1137 192h2V193h-2Z M1135 186h6V192h-6Z M1137 188V190h2V188Z M1149 156h2V168h-2Z M1147 168h6V188h-6Z M1149 170V186h2V170Z" fill="#0000ff" fill-rule="evenodd"/>
<polyline points="39,246.7 46.1,243.2 56.8,239.6 68.7,236 80.5,232.5 92.4,230.7 104.3,230.7 119,231.3 142.4,232.2 153.2,233.5 164,236.2 182,240.1 196.3,242.5 217.9,249.7 235.9,256.9 250.3,266.8 271.9,280.3 289.9,289.2 307.8,297.7 327,310 340,318 352.6,324.4 360,328 380.7,334.7 403,343.5 427.6,353.5 455,362.3 480,370.4 519,382 539,386 560,390 590,394 598.8,396 617.5,400.6 641.9,411 673.8,422.2 711.3,430.7 739.5,435.3 767.6,439.1 795.8,440 815,439 829,436.5 843,431 858.1,423.5 880.7,411.1 911,391.4 941.3,368.6 971.7,341.3 1002,318.6 1032.3,297.3 1062.6,276.1 1093,255.5 1103,250.5 1117,242.5 1132,235 1142,231 1151,227" stroke="#ff0000" stroke-width="3" fill="none" stroke-linejoin="round"/>
<polyline points="39,189.7 46,187.4 54.4,186.2 62.7,193.3 74.6,200.4 86.5,209.3 98.3,217 110,226.3 128,239.8 140.6,247.9 158.6,267.7 176.5,284.7 194.5,297.3 217.9,315.3 235.9,327.9 253.9,338.7 266.5,346.3 278.3,348.1 299,348.4 325,353.5 359,359.5 364,361.5 370,360.5 378,360 400,363.7 419,372 430,378.5 442,384.5 461,389.8 472,392.6 479,393 499,401.7 519,411.5 539,417 560,418.5 578,413.5 599,412 617.5,412.8 636.3,422.2 660.7,438.2 673.8,441.9 692.6,451.3 711.3,458.8 730.1,465.4 739.5,468.2 748.9,466.3 767.6,456 786.4,449.4 805.1,441.9 815,437 829,428 843.6,408.4 858.1,391 872.6,369.2 887.1,343.1 901.6,311.5 907,298.5 914,286.5 920,277 929,265 938.2,252 947.5,242.5 960,235 971,230 980,224.5 987.4,220.5 993,219.8 1003,221.5 1011.4,223.7 1017,226.2 1026,230 1036.6,234.4 1053,238.2 1069.5,237.1 1080.4,236 1099,237.5 1113,237.5 1130,231.2 1145,223 1151,220" stroke="#008000" stroke-width="3" fill="none" stroke-linejoin="round"/>
<polyline points="908.6,180 944.9,243.9" stroke="#0000ff" stroke-width="3" fill="none"/>
<polyline points="987.4,218.6 1005.5,256.5 1017.4,229.1 1035.5,257.5 1077.6,222.2 1114,241 1144.4,185.4" stroke="#0000ff" stroke-width="3" fill="none" stroke-linejoin="round"/>
<polyline points="1002.7,221.5 1095,221.5" stroke="#0000ff" stroke-width="1" fill="none"/>
<path d="M1219.5 121V550M1219 540.5h10M1219 532.5h5M1219 524.5h10M1219 517.5h5M1219 509.5h10M1219 501.5h5M1219 494.5h10M1219 486.5h5M1219 478.5h10M1219 471.5h5M1219 463.5h10M1219 455.5h5M1219 448.5h10M1219 440.5h5M1219 432.5h10M1219 425.5h5M1219 417.5h10M1219 409.5h5M1219 402.5h10M1219 394.5h5M1219 386.5h10M1219 379.5h5M1219 371.5h10M1219 363.5h5M1219 356.5h10M1219 348.5h5M1219 340.5h10M1219 333.5h5M1219 325.5h10M1219 317.5h5M1219 310.5h10M1219 302.5h5M1219 294.5h10M1219 287.5h5M1219 279.5h10M1219 272.5h5M1219 264.5h10M1219 256.5h5M1219 249.5h10M1219 241.5h5M1219 233.5h10M1219 226.5h5M1219 218.5h10M1219 210.5h5M1219 203.5h10M1219 195.5h5M1219 187.5h10M1219 180.5h5M1219 172.5h10M1219 164.5h5M1219 157.5h10M1219 149.5h5M1219 141.5h10M1219 134.5h5M1219 126.5h10M1219.5 553V707M1219 691.5h10M1219 680.5h5M1219 668.5h10M1219 657.5h5M1219 646.5h10M1219 635.5h5M1219 623.5h10M1219 612.5h5M1219 601.5h10M1219 590.5h5M1219 579.5h10M1219 567.5h5M1219 556.5h10M39 707.5H1220M61.5 707V724M92.5 707V724M116.5 707V724M146.5 707V724M170.5 707V724M195.5 707V724M225.5 707V724M249.5 707V724M297.5 707V724M328.5 707V724M352.5 707V724M382.5 707V724M406.5 707V724M430.5 707V724M461.5 707V724M485.5 707V724M509.5 707V724M539.5 707V724M563.5 707V724M594.5 707V724M618.5 707V724M642.5 707V724M672.5 707V724M696.5 707V724M721.5 707V724M751.5 707V724M775.5 707V724M799.5 707V724M829.5 707V724M854.5 707V724M884.5 707V724M932.5 707V724M956.5 707V724M987.5 707V724M1011.5 707V724M1035.5 707V724M1065.5 707V724M1089.5 707V724M1120.5 707V724M1144.5 707V724M1168.5 707V724M1198.5 707V724" stroke="#000" stroke-width="1" fill="none"/>
</svg>
<div class="a" style="left:1224px;top:159px;width:46px;height:16px;background:#000;color:#00ff00;font-size:10.3px;line-height:16px;text-align:center">43253.01</div>
<div class="a" style="left:0;top:0;width:1279px;height:758px;overflow:hidden"><div class="yl" style="top:533.8px">19000</div>
<div class="yl" style="top:518.5px">20000</div>
<div class="yl" style="top:503.2px">21000</div>
<div class="yl" style="top:487.8px">22000</div>
<div class="yl" style="top:472.5px">23000</div>
<div class="yl" style="top:457.2px">24000</div>
<div class="yl" style="top:441.9px">25000</div>
<div class="yl" style="top:426.6px">26000</div>
<div class="yl" style="top:411.2px">27000</div>
<div class="yl" style="top:395.9px">28000</div>
<div class="yl" style="top:380.6px">29000</div>
<div class="yl" style="top:365.3px">30000</div>
<div class="yl" style="top:350px">31000</div>
<div class="yl" style="top:334.6px">32000</div>
<div class="yl" style="top:319.3px">33000</div>
<div class="yl" style="top:304px">34000</div>
<div class="yl" style="top:288.7px">35000</div>
<div class="yl" style="top:273.4px">36000</div>
<div class="yl" style="top:258px">37000</div>
<div class="yl" style="top:242.7px">38000</div>
<div class="yl" style="top:227.4px">39000</div>
<div class="yl" style="top:212.1px">40000</div>
<div class="yl" style="top:196.8px">41000</div>
<div class="yl" style="top:181.4px">42000</div>
<div class="yl" style="top:166.1px">43000</div>
<div class="yl" style="top:150.8px">44000</div>
<div class="yl" style="top:135.5px">45000</div>
<div class="yl" style="top:685.5px">10000</div>
<div class="yl" style="top:663px">20000</div>
<div class="yl" style="top:640.6px">30000</div>
<div class="yl" style="top:618.1px">40000</div>
<div class="yl" style="top:595.7px">50000</div>
<div class="yl" style="top:573.2px">60000</div>
<div class="xl" style="left:40px">M</div>
<div class="xl" style="left:63px">J</div>
<div class="xl" style="left:94px">J</div>
<div class="xl" style="left:118px">A</div>
<div class="xl" style="left:148px">S</div>
<div class="xl" style="left:172px">O</div>
<div class="xl" style="left:197px">N</div>
<div class="xl" style="left:227px">D</div>
<div class="xl" style="left:251px">2019</div>
<div class="xl" style="left:299px">M</div>
<div class="xl" style="left:330px">A</div>
<div class="xl" style="left:354px">M</div>
<div class="xl" style="left:384px">J</div>
<div class="xl" style="left:408px">J</div>
<div class="xl" style="left:432px">A</div>
<div class="xl" style="left:463px">S</div>
<div class="xl" style="left:487px">O</div>
<div class="xl" style="left:511px">N</div>
<div class="xl" style="left:541px">D</div>
<div class="xl" style="left:565px">2020</div>
<div class="xl" style="left:620px">M</div>
<div class="xl" style="left:644px">A</div>
<div class="xl" style="left:674px">M</div>
<div class="xl" style="left:698px">J</div>
<div class="xl" style="left:723px">J</div>
<div class="xl" style="left:753px">A</div>
<div class="xl" style="left:777px">S</div>
<div class="xl" style="left:801px">O</div>
<div class="xl" style="left:831px">N</div>
<div class="xl" style="left:856px">D</div>
<div class="xl" style="left:886px">2021</div>
<div class="xl" style="left:934px">M</div>
<div class="xl" style="left:958px">A</div>
<div class="xl" style="left:989px">M</div>
<div class="xl" style="left:1013px">J</div>
<div class="xl" style="left:1037px">J</div>
<div class="xl" style="left:1067px">A</div>
<div class="xl" style="left:1091px">S</div>
<div class="xl" style="left:1122px">O</div>
<div class="xl" style="left:1146px">N</div>
<div class="xl" style="left:1170px">D</div>
<div class="xl" style="left:1200px;width:20px;overflow:hidden;padding-right:0">2022</div></div>
<div class="a" style="left:328px;top:51px;font-size:10.8px;color:#000">Moving Average</div>
<div class="a" style="left:1221px;top:694px;width:39px;height:13px;border:1px solid #000;border-bottom:none;background:#fff;font-size:9.3px;line-height:10px;padding-left:1px;color:#222">x100000</div>
</body></html>
